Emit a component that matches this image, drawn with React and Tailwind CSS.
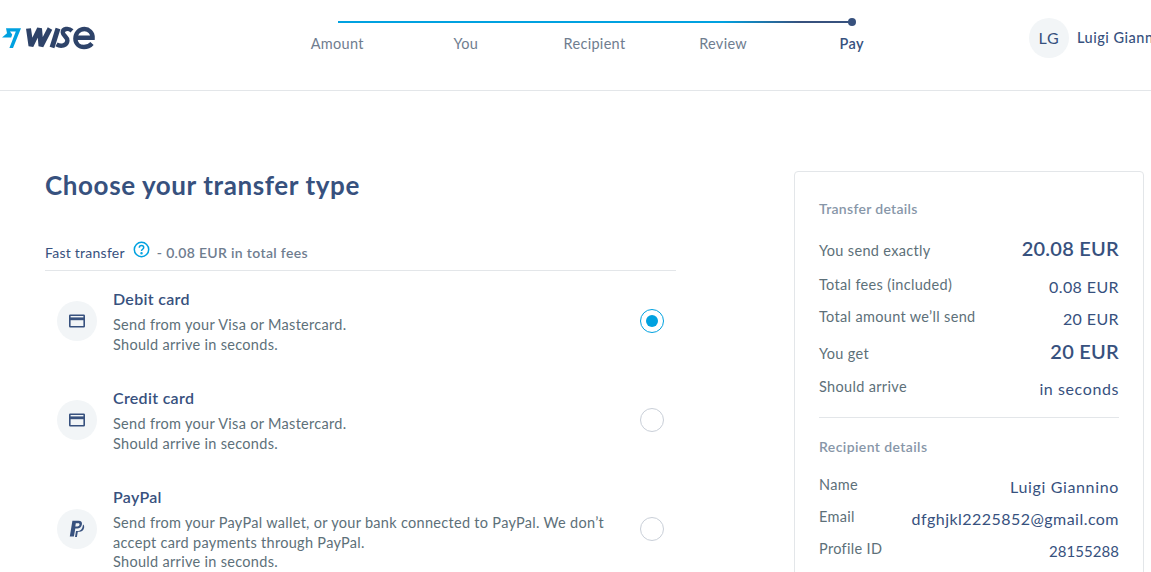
import React from "react";

function CardIcon() {
  return (
    <svg width="16" height="14" viewBox="0 0 16 14" fill="none" stroke="#37517e" strokeWidth="1.6">
      <rect x="0.8" y="1.3" width="14.4" height="11.4" rx="0.5" />
      <rect x="1" y="3.4" width="14" height="2.8" fill="#37517e" stroke="none" />
    </svg>
  );
}

function PayPalIcon() {
  return (
    <svg width="16" height="18" viewBox="0 0 16 18" fill="#37517e">
      <path d="M3.4 0.8h6.2c2.6 0 3.8 1.4 3.3 3.7-.5 2.5-2.3 3.9-4.8 3.9H6.3l-1.4 8H0.8z" />
      <path d="M6.8 3.2h2.4c1.1 0 1.5.6 1.3 1.5-.2 1.1-1.1 1.7-2.2 1.7H6.3z" fill="#f2f5f7" />
      <path d="M14 4.6c1 .7 1.4 1.8 1.1 3.2-.5 2.5-2.3 3.9-4.8 3.9H8.8l-.9 5.2H6l1-5.8h1.4c3 0 5-1.4 5.6-6.5z" />
    </svg>
  );
}

function Step({ label, active }) {
  return (
    <div className={`w-[128.6px] text-center text-[14.5px] leading-[20px] tracking-[0.3px] ${active ? "text-[#37517e] font-semibold" : "text-[#6f7d8f]"}`}>
      {label}
    </div>
  );
}

function Method({ icon, title, lines, selected, className, radioClass, iconClass }) {
  return (
    <div className={`flex pl-3 pr-3 ${className}`}>
      <div className={`w-[40px] h-[40px] rounded-full bg-[#f2f5f7] flex items-center justify-center shrink-0 ${iconClass}`}>{icon}</div>
      <div className="ml-4 flex-1">
        <div className="text-[16px] leading-[20px] font-semibold text-[#37517e] tracking-[0.3px]">{title}</div>
        <div className="mt-[6px] text-[14.5px] leading-[19.5px] text-[#5d7079] tracking-[0.3px]">
          {lines.map((l) => <div key={l}>{l}</div>)}
        </div>
      </div>
      <div className={`w-[24px] h-[24px] rounded-full shrink-0 ml-4 flex items-center justify-center border ${selected ? "border-[#00a1e0]" : "border-[#c9cfd8]"} ${radioClass}`}>
        {selected && <div className="w-[12px] h-[12px] rounded-full bg-[#00a1e0]" />}
      </div>
    </div>
  );
}

function Row({ label, value, big, className, valueClass }) {
  return (
    <div className={`flex justify-between items-center ${className}`}>
      <span className={`text-[14.5px] text-[#5d7079] tracking-[0.33px] ${big ? "mt-[2px]" : "mb-[2px]"}`}>{label}</span>
      <span className={big ? "text-[20px] font-semibold text-[#37517e] tracking-[0.25px] mb-[4px]" : `text-[#37517e] mt-[2px] ${valueClass || "text-[16px] tracking-[0.4px]"}`}>{value}</span>
    </div>
  );
}

export default function App() {
  return (
    <div className="w-[1151px] h-[572px] overflow-hidden bg-white font-['Lato','Liberation_Sans',sans-serif]">
      <header className="h-[91px] border-b border-[#e3e6e9] flex relative">
        <div className="w-[273px] shrink-0 pt-[20px]">
          <svg width="100" height="35" viewBox="0 0 100 35">
            <path d="M6 8.3H21L13 28H9.4L15.8 11.6H10L12.2 14.6 11.2 17.5H2L7 13.2Z" fill="#00a1e0" />
            <path d="M28.5 8.5 31 26 39.5 8.5 41 26 50 8.5" fill="none" stroke="#2e4369" strokeWidth="5" strokeLinejoin="bevel" />
            <path d="M58 8.5 52 27.5" fill="none" stroke="#2e4369" strokeWidth="5" />
            <path d="M72 10.8C68.5 7.6 62.5 8.6 62.8 12.6 63 15.6 67.6 17 67.4 20.6 67 25.6 61 27 56.5 24.4" fill="none" stroke="#2e4369" strokeWidth="4.4" />
            <path d="M76 17.8H92.6C92.8 12.6 88.8 9 84.5 9 79 9 75.4 13.5 75.4 18.5 75.4 23.5 79 27 84 27 87.5 27 90 25.6 92 23.4" fill="none" stroke="#2e4369" strokeWidth="4.4" />
          </svg>
        </div>
        <div className="w-[643px] shrink-0 relative pt-[34px]">
          <div className="absolute left-[65px] top-[21px] w-[513px] h-[2px] bg-[linear-gradient(90deg,#00a1e0_0%,#00a1e0_75%,#37517e_90%,#37517e_100%)]" />
          <div className="absolute left-[575px] top-[18px] w-[8px] h-[8px] rounded-full bg-[#37517e]" />
          <div className="flex">
            {["Amount", "You", "Recipient", "Review"].map((s) => <Step key={s} label={s} />)}
            <Step label="Pay" active />
          </div>
        </div>
        <div className="flex-1 flex items-start pt-[18px] pl-[113px] whitespace-nowrap overflow-hidden">
          <div className="w-[40px] h-[40px] rounded-full bg-[#f2f5f7] flex items-center justify-center text-[#37517e] text-[16px] tracking-[0.8px] shrink-0">LG</div>
          <span className="ml-2 mt-[10px] text-[14.5px] leading-[20px] text-[#37517e] font-medium tracking-[0.5px]">Luigi Giannino</span>
        </div>
      </header>

      <main className="flex pl-[45px] pt-[80px]">
        <section className="w-[631px] shrink-0">
          <h1 className="-mt-[2px] text-[26px] leading-[32px] font-bold text-[#37517e] tracking-[0.6px]">Choose your transfer type</h1>
          <div className="mt-[37px] h-[33px] border-b border-[#e3e6e9] flex items-start text-[14px] leading-[20px] tracking-[0.25px] pt-[5px]">
            <span className="text-[#37517e]">Fast transfer</span>
            <svg className="ml-[8px] -mt-[2px]" width="17" height="17" viewBox="0 0 17 17" fill="none" stroke="#00a1e0" strokeWidth="1.5">
              <circle cx="8.5" cy="8.5" r="7.2" />
              <path d="M6.3 6.8c0-1.4 1-2.2 2.2-2.2s2.2.8 2.2 2c0 1.7-2.2 1.6-2.2 3.4" />
              <circle cx="8.5" cy="12.3" r="0.5" fill="#00a1e0" />
            </svg>
            <span className="ml-[7px] text-[#6f7d8f] font-semibold tracking-[0.33px]">- 0.08 EUR in total fees</span>
          </div>
          <Method className="mt-[18px] h-[99px]" iconClass="mt-[12px]" radioClass="mt-[20px]" icon={<CardIcon />} title="Debit card" lines={["Send from your Visa or Mastercard.", "Should arrive in seconds."]} selected />
          <Method className="h-[99px]" iconClass="mt-[12px]" radioClass="mt-[20px]" icon={<CardIcon />} title="Credit card" lines={["Send from your Visa or Mastercard.", "Should arrive in seconds."]} />
          <Method className="h-[99px]" iconClass="mt-[22px]" radioClass="mt-[30px]" icon={<PayPalIcon />} title="PayPal" lines={["Send from your PayPal wallet, or your bank connected to PayPal. We don’t", "accept card payments through PayPal.", "Should arrive in seconds."]} />
        </section>
        <aside className="ml-[118px] w-[350px] h-[500px] shrink-0 border border-[#e3e6e9] rounded-[4px] px-6 pt-[27px]">
          <div className="text-[14px] leading-[20px] font-semibold text-[#8796a8] tracking-[0.3px]">Transfer details</div>
          <Row className="mt-[17px] h-[28px]" label="You send exactly" value="20.08 EUR" big />
          <Row className="mt-[8px] h-[28px]" label="Total fees (included)" value="0.08 EUR" />
          <Row className="mt-[4px] h-[28px]" label="Total amount we’ll send" value="20 EUR" />
          <Row className="mt-[7px] h-[28px]" label="You get" value="20 EUR" big />
          <Row className="mt-[7px] h-[28px]" label="Should arrive" value="in seconds" valueClass="text-[16px] tracking-[0.6px]" />
          <div className="mt-[15px] border-t border-[#e3e6e9]" />
          <div className="mt-[19px] text-[14px] leading-[20px] font-semibold text-[#8796a8] tracking-[0.4px]">Recipient details</div>
          <Row className="mt-[15px] h-[28px]" label="Name" value="Luigi Giannino" valueClass="text-[16px] tracking-[0.65px]" />
          <Row className="mt-[4px] h-[28px]" label="Email" value="dfghjkl2225852@gmail.com" valueClass="text-[16px] tracking-[0.46px]" />
          <Row className="mt-[4px] h-[28px]" label="Profile ID" value="28155288" valueClass="text-[15px] tracking-[0.05px]" />
        </aside>
      </main>
    </div>
  );
}
